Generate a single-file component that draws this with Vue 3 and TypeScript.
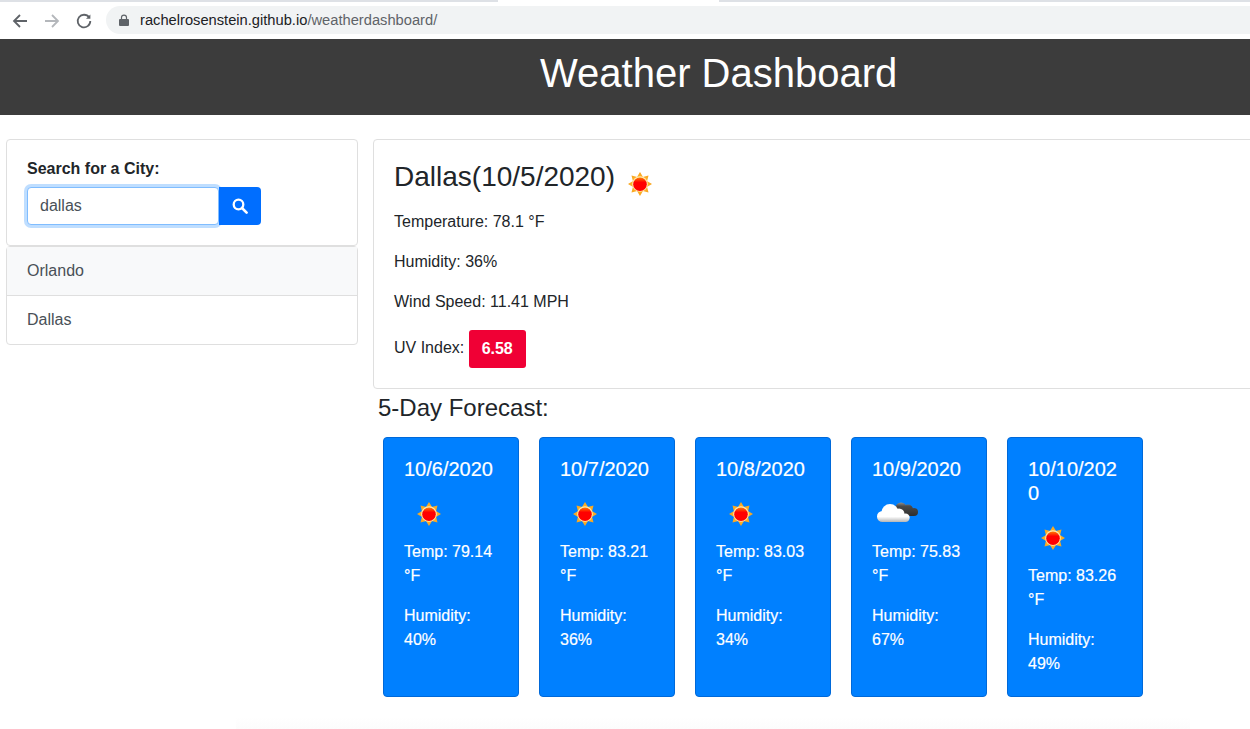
<script setup lang="ts">
interface Day {
  date: string
  icon: 'sun' | 'cloud'
  temp: string
  humidity: string
}

const cities = ['Orlando', 'Dallas']

const days: Day[] = [
  { date: '10/6/2020', icon: 'sun', temp: '79.14', humidity: '40' },
  { date: '10/7/2020', icon: 'sun', temp: '83.21', humidity: '36' },
  { date: '10/8/2020', icon: 'sun', temp: '83.03', humidity: '34' },
  { date: '10/9/2020', icon: 'cloud', temp: '75.83', humidity: '67' },
  { date: '10/10/2020', icon: 'sun', temp: '83.26', humidity: '49' },
]

const rays = [0, 45, 90, 135, 180, 225, 270, 315]
</script>

<template>
  <div class="page">
    <svg class="defs" width="0" height="0">
      <defs>
        <linearGradient id="ray" x1="0" y1="13" x2="0" y2="19" gradientUnits="userSpaceOnUse">
          <stop offset="0" stop-color="#f7a21b" />
          <stop offset="1" stop-color="#ffb52e" />
        </linearGradient>
        <linearGradient id="disc" x1="0" y1="18" x2="0" y2="33" gradientUnits="userSpaceOnUse">
          <stop offset="0" stop-color="#ff8a00" />
          <stop offset=".35" stop-color="#f00" />
          <stop offset="1" stop-color="#f00" />
        </linearGradient>
        <linearGradient id="white-cloud" x1="0" y1="15" x2="0" y2="33" gradientUnits="userSpaceOnUse">
          <stop offset="0" stop-color="#fff" />
          <stop offset=".7" stop-color="#fff" />
          <stop offset="1" stop-color="#b5b5b5" />
        </linearGradient>
        <linearGradient id="dark-cloud" x1="0" y1="13" x2="0" y2="27" gradientUnits="userSpaceOnUse">
          <stop offset="0" stop-color="#9a9a9a" />
          <stop offset=".3" stop-color="#4a4a4a" />
          <stop offset="1" stop-color="#2e2e2e" />
        </linearGradient>
        <symbol id="sun" viewBox="0 0 50 50">
          <path v-for="r in rays" :key="r" d="M25 13l3.600 6h-7.200z" fill="url(#ray)" :transform="`rotate(${r} 25 25)`" />
          <circle cx="25" cy="25" r="7.800" fill="#ffe9b0" />
          <circle cx="25" cy="25.300" r="6.800" fill="url(#disc)" />
        </symbol>
        <symbol id="cloud" viewBox="0 0 50 50">
          <g fill="url(#dark-cloud)">
            <circle cx="29" cy="19" r="5.500" />
            <circle cx="36" cy="20.500" r="5" />
            <circle cx="42" cy="23" r="4" />
            <rect x="26" y="21" width="16" height="6" />
          </g>
          <g fill="url(#white-cloud)">
            <circle cx="10.500" cy="27.500" r="5.500" />
            <circle cx="18" cy="23.500" r="8.500" />
            <circle cx="27" cy="25" r="5.500" />
            <circle cx="33.500" cy="28.800" r="4.200" />
            <rect x="10" y="26" width="24" height="7" />
          </g>
        </symbol>
      </defs>
    </svg>

    <div class="tabstrip">
      <div class="strip-left"></div>
      <div class="strip-active"></div>
      <div class="strip-right"></div>
    </div>
    <div class="toolbar">
      <svg class="nav" width="18" height="18" viewBox="0 0 18 18" fill="none" stroke="#5f6368" stroke-width="1.8">
        <path d="M16 9H3M9 3L3 9l6 6" />
      </svg>
      <svg class="nav" width="18" height="18" viewBox="0 0 18 18" fill="none" stroke="#b4b7bb" stroke-width="1.8">
        <path d="M2 9h13M9 3l6 6-6 6" />
      </svg>
      <svg class="nav" width="18" height="18" viewBox="0 0 18 18" fill="none" stroke="#5f6368" stroke-width="1.8">
        <path d="M14.2 5.500A6.300 6.300 0 1 0 15.300 9" />
        <path d="M15.400 2.400v4.400H11" fill="#5f6368" stroke="none" />
      </svg>
      <div class="omnibox">
        <svg width="12" height="12" viewBox="0 0 12 12" fill="#5f6368">
          <path d="M2 5h8a1 1 0 0 1 1 1v5a1 1 0 0 1-1 1H2a1 1 0 0 1-1-1V6a1 1 0 0 1 1-1z" />
          <path d="M3.500 5.500V3.600a2.500 2.500 0 0 1 5 0v1.900" fill="none" stroke="#5f6368" stroke-width="1.200" />
        </svg>
        <span class="url"><b>rachelrosenstein.github.io</b>/weatherdashboard/</span>
      </div>
    </div>

    <header class="banner">
      <h1>Weather Dashboard</h1>
    </header>

    <div class="content">
      <aside class="side">
        <div class="card search">
          <label>Search for a City:</label>
          <div class="search-row">
            <div class="fake-input">dallas</div>
            <button class="search-btn" type="button" aria-label="Search">
              <svg width="16" height="16" viewBox="0 0 16 16" fill="none" stroke="#fff">
                <circle cx="6.500" cy="6.500" r="4.800" stroke-width="2.300" />
                <path d="M10 10l4.600 4.600" stroke-width="2.600" stroke-linecap="round" />
              </svg>
            </button>
          </div>
        </div>
        <ul class="history">
          <li v-for="(city, i) in cities" :key="city" :class="{ shaded: i === 0 }">{{ city }}</li>
        </ul>
      </aside>

      <main class="main">
        <section class="card today">
          <h2>
            <span>Dallas(10/5/2020)</span>
            <svg class="icon big"><use href="#sun" /></svg>
          </h2>
          <p>Temperature: 78.1 °F</p>
          <p>Humidity: 36%</p>
          <p>Wind Speed: 11.41 MPH</p>
          <p class="uv">UV Index: <span class="uv-badge">6.58</span></p>
        </section>

        <h3>5-Day Forecast:</h3>

        <div class="forecast">
          <article v-for="d in days" :key="d.date" class="day">
            <h5>{{ d.date }}</h5>
            <svg class="icon"><use :href="`#${d.icon}`" /></svg>
            <p>Temp: {{ d.temp }} °F</p>
            <p>Humidity: {{ d.humidity }}%</p>
          </article>
        </div>
      </main>
    </div>
    <div class="bottom-fade"></div>
  </div>
</template>

<style>
html, body {
  margin: 0;
  background: #fff;
  overflow: hidden;
}
</style>

<style scoped>
.page {
  position: relative;
  width: 1250px;
  height: 729px;
  overflow: hidden;
  font-family: "Liberation Sans", Arial, sans-serif;
  font-size: 16px;
  line-height: 24px;
  color: #212529;
}

.defs { position: absolute; }

.tabstrip {
  display: flex;
  height: 2px;
}
.strip-left { width: 498px; background: #dee1e6; }
.strip-active { width: 221px; background: #fff; }
.strip-right { flex: 1; background: #dee1e6; }

.toolbar {
  display: flex;
  align-items: center;
  height: 37px;
  padding-left: 11px;
  box-sizing: border-box;
  background: #fff;
}
.nav { margin-right: 14px; flex: none; }
.nav:nth-child(3) { margin-right: 13px; }

.omnibox {
  display: flex;
  align-items: center;
  gap: 10px;
  flex: 1;
  height: 28px;
  margin-top: -1px;
  padding-left: 12px;
  border-radius: 14px 0 0 14px;
  background: #f1f3f4;
}
.url {
  font-size: 14.7px;
  color: #5f6368;
}
.url b {
  font-weight: 400;
  color: #202124;
}

.banner {
  height: 76px;
  background: #3c3c3c;
  display: flex;
  align-items: center;
  padding: 0 0 8px 540px;
  box-sizing: border-box;
}
.banner h1 {
  margin: 0;
  font-size: 40px;
  font-weight: 400;
  line-height: 48px;
  color: #fff;
}

.content {
  display: flex;
  gap: 15px;
  padding: 24px 0 0 6px;
}

.side {
  flex: none;
  width: 352px;
}

.card {
  border: 1px solid #dfdfdf;
  border-radius: 4px;
  background: #fff;
  box-sizing: border-box;
}

.search {
  height: 107px;
  padding: 17px 20px;
}
.search label {
  display: block;
  font-weight: 700;
  margin-bottom: 6px;
}
.search-row { display: flex; }
.fake-input {
  width: 192px;
  height: 38px;
  box-sizing: border-box;
  padding: 6px 12px;
  border: 1px solid #80bdff;
  border-radius: 4px;
  box-shadow: 0 0 0 3px rgba(0, 123, 255, .25);
  color: #495057;
  background: #fff;
}
.search-btn {
  width: 42px;
  height: 38px;
  padding: 0;
  border: none;
  border-radius: 0 4px 4px 0;
  background: #006eff;
  display: flex;
  align-items: center;
  justify-content: center;
}

.history {
  list-style: none;
  margin: 0;
  padding: 0;
  border: 1px solid #dfdfdf;
  border-radius: 4px;
  color: #495057;
}
.history li {
  height: 48px;
  padding: 12px 20px;
  box-sizing: border-box;
}
.history li + li {
  height: 49px;
  border-top: 1px solid #dfdfdf;
}
.history .shaded {
  background: #f8f9fa;
}

.main {
  flex: none;
  width: 900px;
}

.today {
  height: 250px;
  padding: 20px;
}
.today h2 {
  display: flex;
  height: 33px;
  margin: 0 0 17px;
  font-size: 28px;
  font-weight: 400;
  line-height: 33px;
  white-space: nowrap;
}
.today p {
  margin: 0 0 16px;
}
.icon {
  display: block;
  width: 50px;
  height: 50px;
}
.icon.big {
  flex: none;
  margin: -1px 0 0;
}
.uv-badge {
  display: inline-block;
  width: 57px;
  height: 38px;
  line-height: 38px;
  text-align: center;
  vertical-align: -1px;
  border-radius: 3px;
  background: #f00035;
  color: #fff;
  font-weight: 700;
}

h3 {
  margin: 2px 0 13px 5px;
  font-size: 24px;
  font-weight: 400;
  line-height: 33px;
}

.forecast {
  display: flex;
  gap: 20px;
  padding-left: 10px;
}

.day {
  width: 136px;
  height: 260px;
  box-sizing: border-box;
  padding: 19px 20px 0;
  border: 1px solid #0069d9;
  border-radius: 4px;
  background: #0080ff;
  color: #fff;
  -webkit-text-stroke: .2px #fff;
}
.day h5 {
  margin: 0 0 8px;
  font-size: 20px;
  font-weight: 400;
  line-height: 24px;
  overflow-wrap: anywhere;
}
.day p {
  margin: 0 0 16px;
}
.day .icon {
  margin-bottom: 1px;
}

.bottom-fade {
  position: absolute;
  left: 236px;
  right: 60px;
  bottom: 0;
  height: 12px;
  background: linear-gradient(#fff, #fcfcfc);
}
</style>
